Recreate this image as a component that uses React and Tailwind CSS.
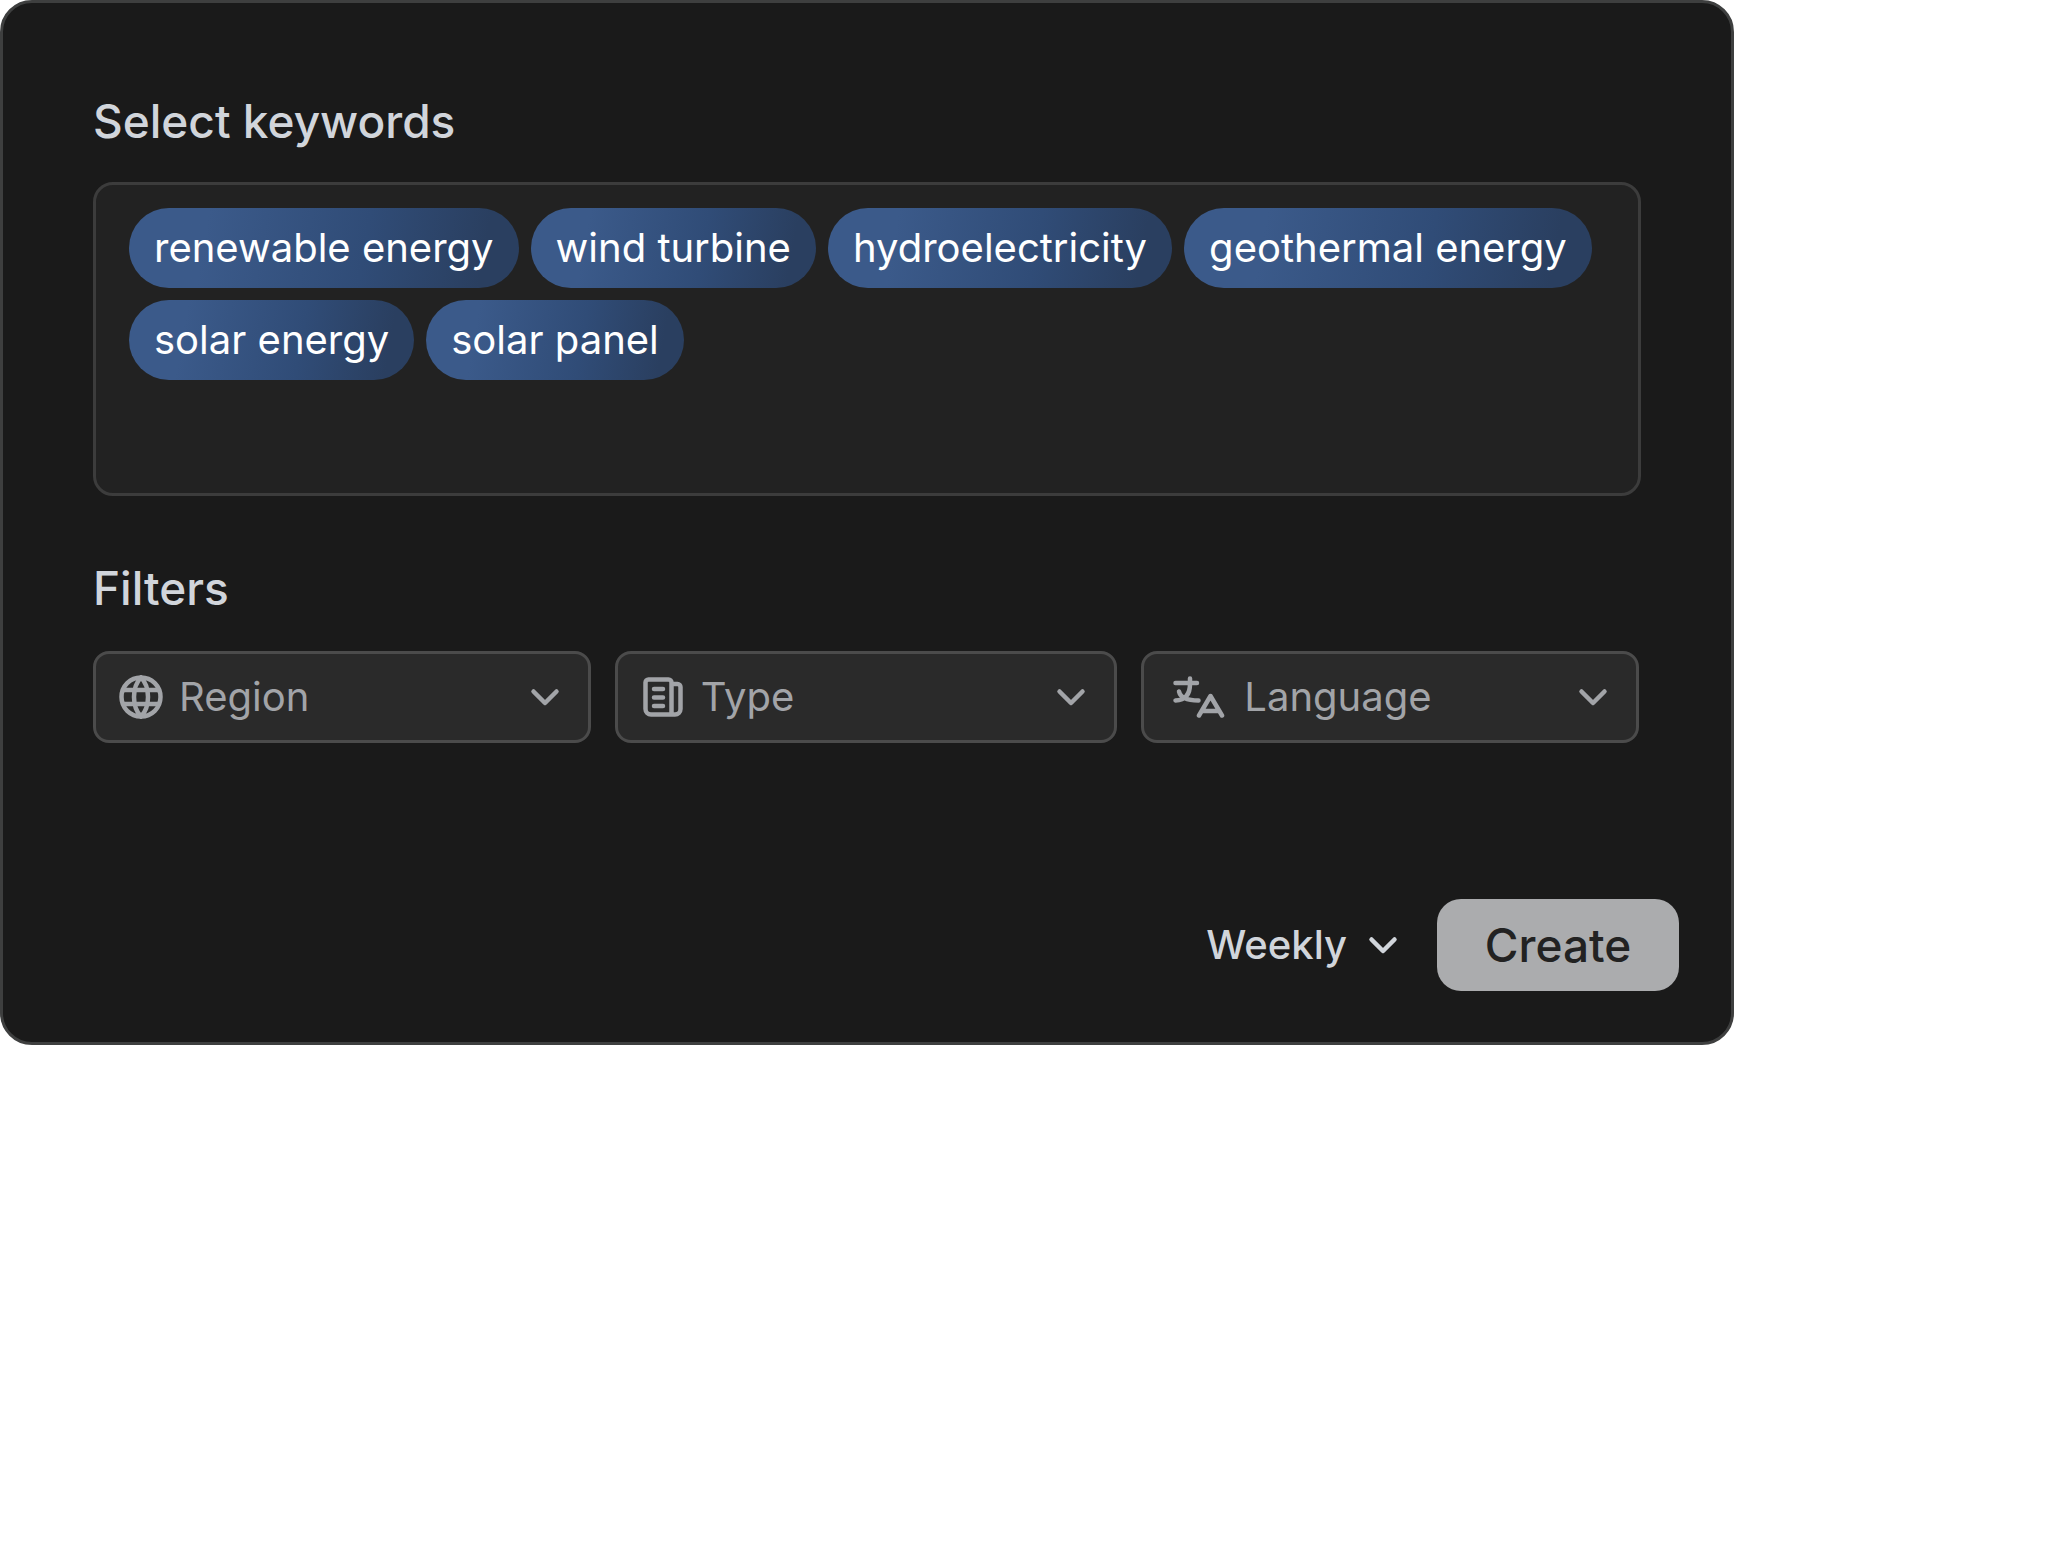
import React, { useState } from "react";

const keywords = [
  "renewable energy",
  "wind turbine",
  "hydroelectricity",
  "geothermal energy",
  "solar energy",
  "solar panel",
];

const Chevron = ({ className }) => (
  <svg
    viewBox="0 0 32 32"
    fill="none"
    stroke="currentColor"
    strokeWidth="4.5"
    strokeLinecap="round"
    strokeLinejoin="round"
    className={`pointer-events-none absolute size-8 ${className}`}
  >
    <path d="M4.500 10.500L16 22L27.500 10.500" />
  </svg>
);

const GlobeIcon = () => (
  <svg viewBox="0 0 44 44" fill="none" stroke="currentColor" strokeWidth="4.5" className="size-11">
    <circle cx="22" cy="22" r="19.5" />
    <path d="M22 2.500C17.500 7 15 14 15 22s2.500 15 7 19.500C26.500 37 29 30 29 22S26.500 7 22 2.500z" />
    <path d="M4 15h36M4 29h36" />
  </svg>
);

const NewsIcon = () => (
  <svg
    viewBox="0 0 40 40"
    fill="none"
    stroke="currentColor"
    strokeWidth="4.5"
    strokeLinecap="round"
    strokeLinejoin="round"
    className="size-10"
  >
    <path d="M28.500 37V5.500a3 3 0 0 0-3-3h-20a3 3 0 0 0-3 3V32a5.500 5.500 0 0 0 5.500 5.500h24a5.500 5.500 0 0 0 5.500-5.500V10a3 3 0 0 0-3-3h-6" />
    <path d="M11 12h9M11 20.500h9M11 29h9" />
  </svg>
);

const LanguageIcon = () => (
  <svg
    viewBox="0 0 52 42"
    fill="none"
    stroke="currentColor"
    strokeWidth="4.5"
    strokeLinecap="round"
    strokeLinejoin="round"
    className="h-[42px] w-[52px]"
  >
    <path d="M2.500 7H24M17 2.500V8c0 10-4.500 16-14.500 16.500M6 15.500c1.500 6.500 8 9 19.500 9" />
    <path d="M26 39.500L37.500 20L49 39.500M29.500 35h16" />
  </svg>
);

const Filter = ({ label, icon, options, iconWidth = "w-11", pad = "pl-[83px]" }) => (
  <div className="relative flex items-center text-[#a2a4a8]">
    <span className={`pointer-events-none absolute left-[26px] flex justify-center ${iconWidth}`}>
      {icon}
    </span>
    <select
      aria-label={label}
      className={`h-[92px] w-full appearance-none rounded-2xl border-3 border-[#4b4b4b] bg-[#2a2a2a] pr-20 text-[40px] outline-none ${pad}`}
    >
      <option>{label}</option>
      {options.map((option) => (
        <option key={option}>{option}</option>
      ))}
    </select>
    <Chevron className="right-[30px]" />
  </div>
);

const App = () => {
  const [frequency, setFrequency] = useState("Weekly");

  return (
    <div className="min-h-screen bg-white font-['Inter',sans-serif]">
      <form
        onSubmit={(e) => e.preventDefault()}
        className="w-full max-w-[1734px] rounded-[32px] border-3 border-[#3e3f3f] bg-[#1a1a1a] px-[90px] pt-[89px] pb-[51px]"
      >
        <h2 className="text-[46px] leading-[58px] font-medium text-[#d1d5db]">Select keywords</h2>
        <div className="mt-8 flex min-h-[314px] flex-wrap content-start gap-3 rounded-[20px] border-3 border-[#3c3c3c] bg-[#222222] px-[33px] py-[23px]">
          {keywords.map((keyword) => (
            <span
              key={keyword}
              className="rounded-full bg-linear-100 from-[#3b5a8a] from-20% via-[#304c77] via-60% to-[#2a3f60] to-90% px-[25px] text-[40px] leading-[80px] text-white"
            >
              {keyword}
            </span>
          ))}
        </div>

        <h2 className="mt-[63px] text-[46px] leading-[58px] font-medium text-[#d1d5db]">Filters</h2>
        <div className="mt-[34px] mr-0.5 grid grid-cols-[498fr_503fr_498fr] gap-6">
          <Filter
            label="Region"
            icon={<GlobeIcon />}
            options={["Europe", "Asia", "Africa", "Americas"]}
          />
          <Filter label="Type" icon={<NewsIcon />} options={["News", "Blog", "Report"]} />
          <Filter
            label="Language"
            icon={<LanguageIcon />}
            options={["English", "German", "French"]}
            iconWidth="w-16"
            pad="pl-[100px]"
          />
        </div>

        <div className="mt-[156px] -mr-[38px] flex items-center justify-end gap-[38px]">
          <div className="relative flex items-center text-[#d1d5db]">
            <select
              aria-label="Frequency"
              value={frequency}
              onChange={(e) => setFrequency(e.target.value)}
              className="field-sizing-content appearance-none bg-transparent pr-13 text-[40px] font-medium outline-none"
            >
              <option>Daily</option>
              <option>Weekly</option>
              <option>Monthly</option>
            </select>
            <Chevron className="right-0" />
          </div>
          <button
            type="submit"
            className="h-[92px] w-[242px] rounded-3xl bg-[#abacae] text-[46px] font-medium text-[#222222]"
          >
            Create
          </button>
        </div>
      </form>
    </div>
  );
};

export default App;
